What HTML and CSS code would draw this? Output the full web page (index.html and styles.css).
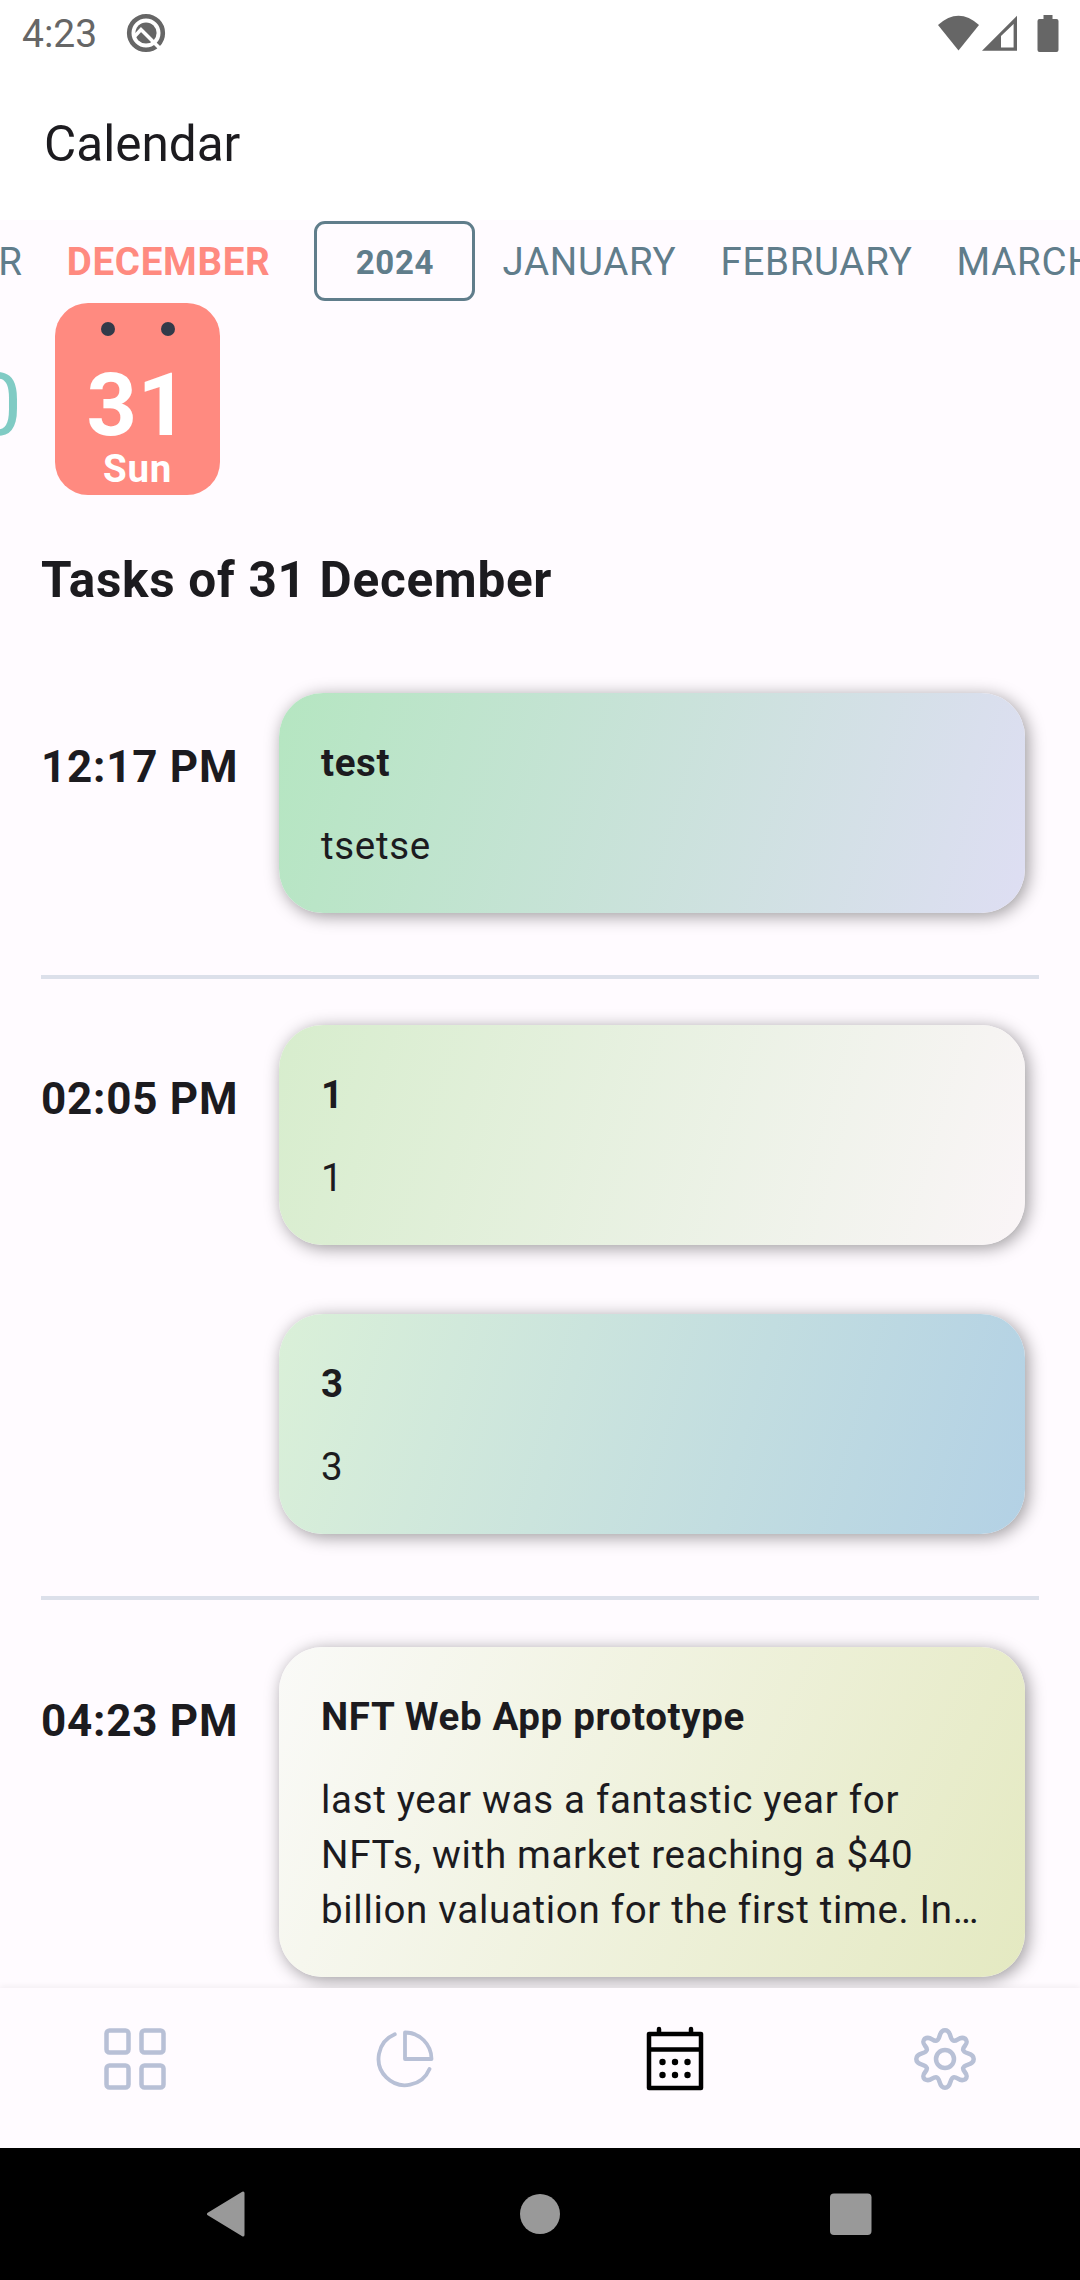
FILE: index.html
```html
<!DOCTYPE html>
<html lang="en">
<head>
<meta charset="utf-8">
<title>Calendar</title>
<link rel="stylesheet" href="styles.css">
</head>
<body>
<div class="screen">
  <header class="status-bar">
    <span class="clock">4:23</span>
    <svg class="status-q" viewBox="0 0 40 40">
      <circle cx="20" cy="20" r="16.8" fill="none" stroke="#666" stroke-width="4.600"/>
      <circle cx="20" cy="20" r="10.600" fill="#666"/>
      <path d="M8 24L15 16.500L35 36.500" fill="none" stroke="#fff" stroke-width="3.600"/>
    </svg>
    <svg class="status-signal" viewBox="0 0 122 38">
      <path d="M0 10Q20.500-8.500 41 10L20.500 35.500z" fill="#666"/>
      <path d="M44 35.800L79 .800V35.800zM63 21V32.500H75.600V9z" fill="#666" fill-rule="evenodd"/>
      <path d="M105.500 0h9v4h4a2 2 0 0 1 2 2v29a2 2 0 0 1-2 2h-17a2 2 0 0 1-2-2V6a2 2 0 0 1 2-2h4z" fill="#666"/>
    </svg>
  </header>
  <h1 class="app-title">Calendar</h1>

  <main class="content">
    <nav class="months">
      <span class="month">NOVEMBER</span>
      <span class="month month-current">DECEMBER</span>
      <span class="year">2024</span>
      <span class="month">JANUARY</span>
      <span class="month">FEBRUARY</span>
      <span class="month">MARCH</span>
    </nav>
    <div class="days">
      <div class="day"><span class="day-number">30</span></div>
      <div class="day day-current">
        <div class="day-holes"><i></i><i></i></div>
        <span class="day-number">31</span>
        <span class="day-name">Sun</span>
      </div>
    </div>
    <h2 class="tasks-title">Tasks of 31 December</h2>

    <section class="slot">
      <time class="slot-time">12:17 PM</time>
      <div class="slot-cards">
        <article class="card card-mint"><h3>test</h3><p>tsetse</p></article>
      </div>
    </section>
    <section class="slot">
      <time class="slot-time">02:05 PM</time>
      <div class="slot-cards">
        <article class="card card-lime"><h3>1</h3><p>1</p></article>
        <article class="card card-sky"><h3>3</h3><p>3</p></article>
      </div>
    </section>
    <section class="slot">
      <time class="slot-time">04:23 PM</time>
      <div class="slot-cards">
        <article class="card card-olive"><h3>NFT Web App prototype</h3><p>last year was a fantastic year for<br>NFTs, with market reaching a $40<br>billion valuation for the first time. In…</p></article>
      </div>
    </section>
  </main>

  <nav class="tab-bar">
    <svg class="tab" viewBox="0 0 66 66">
      <rect x="4.500" y="4.500" width="22" height="22" rx="3"/><rect x="39.500" y="4.500" width="22" height="22" rx="3"/>
      <rect x="4.500" y="39.500" width="22" height="22" rx="3"/><rect x="39.500" y="39.500" width="22" height="22" rx="3"/>
    </svg>
    <svg class="tab" viewBox="0 0 66 66">
      <path class="thin" d="M22.800 8.300A26.500 26.500 0 1 0 57.500 43"/>
      <path class="thin" d="M33 6.500V33H59.500A26.500 26.500 0 0 0 33 6.500z"/>
    </svg>
    <svg class="tab tab-active" viewBox="0 0 66 66">
      <path d="M7 8h52v54H7zM7 23.500h52M17 3v5M49 3v5"/>
      <g class="tab-dots"><circle cx="20.500" cy="36" r="3.200"/><circle cx="33" cy="36" r="3.200"/><circle cx="45.500" cy="36" r="3.200"/><circle cx="20.500" cy="49" r="3.200"/><circle cx="33" cy="49" r="3.200"/><circle cx="45.500" cy="49" r="3.200"/></g>
    </svg>
    <svg class="tab" viewBox="0 0 66 66">
      <circle cx="33" cy="33" r="9"/>
      <path d="M33 4.300C40 4.300 37 14.500 42 14.800C46 15 47.500 9.500 53.300 12.700C58 18 50 20.500 51.200 24C52.500 28.800 61.700 26 61.700 33C61.700 40 52.500 37.200 51.200 42C50 45.500 58 48 53.300 53.300C47.500 56.500 46 51 42 51.200C37 51.500 40 61.700 33 61.700C26 61.700 29 51.500 24 51.200C20 51 18.500 56.500 12.700 53.300C8 48 16 45.500 14.800 42C13.500 37.200 4.300 40 4.300 33C4.300 26 13.500 28.800 14.800 24C16 20.500 8 18 12.700 12.700C18.500 9.500 20 15 24 14.800C29 14.500 26 4.300 33 4.300z"/>
    </svg>
  </nav>

  <footer class="system-bar">
    <svg class="system-icons" viewBox="0 0 668 46">
      <path d="M2.500 23L37 2V44z" fill="#999" stroke="#999" stroke-width="3" stroke-linejoin="round"/>
      <circle cx="334" cy="23" r="20" fill="#999"/>
      <rect x="624" y="2.500" width="41.500" height="41.500" rx="4" fill="#999"/>
    </svg>
  </footer>
</div>
</body>
</html>
```
FILE: styles.css
```css
* { box-sizing: border-box; margin: 0; padding: 0; }

body {
  width: 1080px;
  height: 2280px;
  overflow: hidden;
  background: #fff;
  color: #1c1b1f;
  font-family: Roboto, "Liberation Sans", sans-serif;
}

.screen {
  display: flex;
  flex-direction: column;
  width: 1080px;
  height: 2280px;
}

.status-bar {
  display: flex;
  flex: none;
  align-items: flex-start;
  height: 66px;
  padding: 11px 22px 0;
  color: #666;
}
.clock { width: 104px; font-size: 39px; line-height: 47px; }
.status-q { width: 40px; height: 40px; margin-top: 2px; }
.status-signal { width: 122px; height: 38px; margin: 4px -2px 0 auto; }

.app-title {
  flex: none;
  height: 154px;
  padding-left: 44px;
  font-size: 49.500px;
  font-weight: 400;
  line-height: 157px;
}

.content {
  flex: none;
  height: 1768px;
  overflow: hidden;
  background: #fffbff;
}

.months {
  display: flex;
  align-items: center;
  width: max-content;
  height: 82px;
  margin: 0 0 1px -186px;
  color: #607d8b;
  font-size: 38.500px;
  letter-spacing: .7px;
}
.month { margin-right: 44px; padding-top: 2px; line-height: 56px; }
.month-current { color: #ff8a80; font-weight: 700; }
.year {
  width: 161px;
  height: 80px;
  margin-right: 27px;
  border: 3px solid;
  border-radius: 11px;
  font-size: 33px;
  font-weight: 700;
  line-height: 77px;
  text-align: center;
}

.days { display: flex; height: 192px; margin-left: -110px; }
.day {
  display: flex;
  flex: none;
  flex-direction: column;
  align-items: center;
  width: 165px;
  height: 192px;
  padding-top: 19px;
  border-radius: 33px;
  color: #80cbc4;
}
.day .day-number { margin-top: 42px; }
.day-current { background: #ff8a80; color: #fff; font-weight: 700; }
.day-holes { display: flex; gap: 46px; height: 14px; margin-bottom: -14px; }
.day-holes i { width: 14px; height: 14px; border-radius: 50%; background: #323a49; }
.day-number { font-size: 88px; line-height: 81px; letter-spacing: .5px; }
.day-name { margin-top: 1px; font-size: 38.500px; line-height: 46px; letter-spacing: .7px; }

.tasks-title {
  margin: 53px 0 80px 41px;
  font-size: 49.500px;
  line-height: 65px;
  letter-spacing: .7px;
}

.slot {
  display: flex;
  margin: 0 41px;
  padding-bottom: 62px;
}
.slot + .slot { padding-top: 46px; border-top: 4px solid #dce0ea; }
.slot:last-child { padding-top: 47px; }
.slot-time {
  width: 238px;
  padding-top: 47px;
  font-size: 44px;
  font-weight: 700;
  line-height: 55px;
  letter-spacing: .75px;
}
.slot-cards { display: grid; gap: 69px; width: 746px; }

.card {
  height: 220px;
  padding: 42px 42px 0;
  border-radius: 44px;
  box-shadow: 3px 3px 17px rgba(0, 0, 0, .4);
  font-size: 38.500px;
  line-height: 55px;
  letter-spacing: .68px;
}
.card h3 {
  margin-bottom: 28px;
  font-size: inherit;
  font-weight: 700;
  letter-spacing: .65px;
}
.card p { white-space: nowrap; }
.card-mint { background: linear-gradient(106.400deg, #b5e6c1, #dedef3); }
.card-lime { background: linear-gradient(106.400deg, #d7edcd, #faf5f7); }
.card-sky { background: linear-gradient(106.400deg, #daf0d8, #b3d1e5); }
.card-olive { height: 330px; background: linear-gradient(113.900deg, #fafaf8, #e4e9c1); }

.tab-bar {
  z-index: 1;
  display: grid;
  flex: none;
  grid-template-columns: repeat(4, 1fr);
  justify-items: center;
  height: 160px;
  padding-top: 38px;
  background: #fffbff;
  box-shadow: 0 -2px 6px rgba(0, 0, 0, .05);
}
.tab {
  width: 66px;
  height: 66px;
  fill: none;
  stroke: #b8c0d6;
  stroke-width: 4.500px;
  stroke-linecap: round;
  stroke-linejoin: round;
}
.tab .thin { stroke-width: 3.800px; }
.tab-active { stroke: #000; }
.tab-dots { fill: #000; stroke: none; }

.system-bar {
  flex: none;
  height: 132px;
  padding: 43px 0 0 206px;
  background: #000;
}
.system-icons { display: block; width: 668px; height: 46px; }
```
